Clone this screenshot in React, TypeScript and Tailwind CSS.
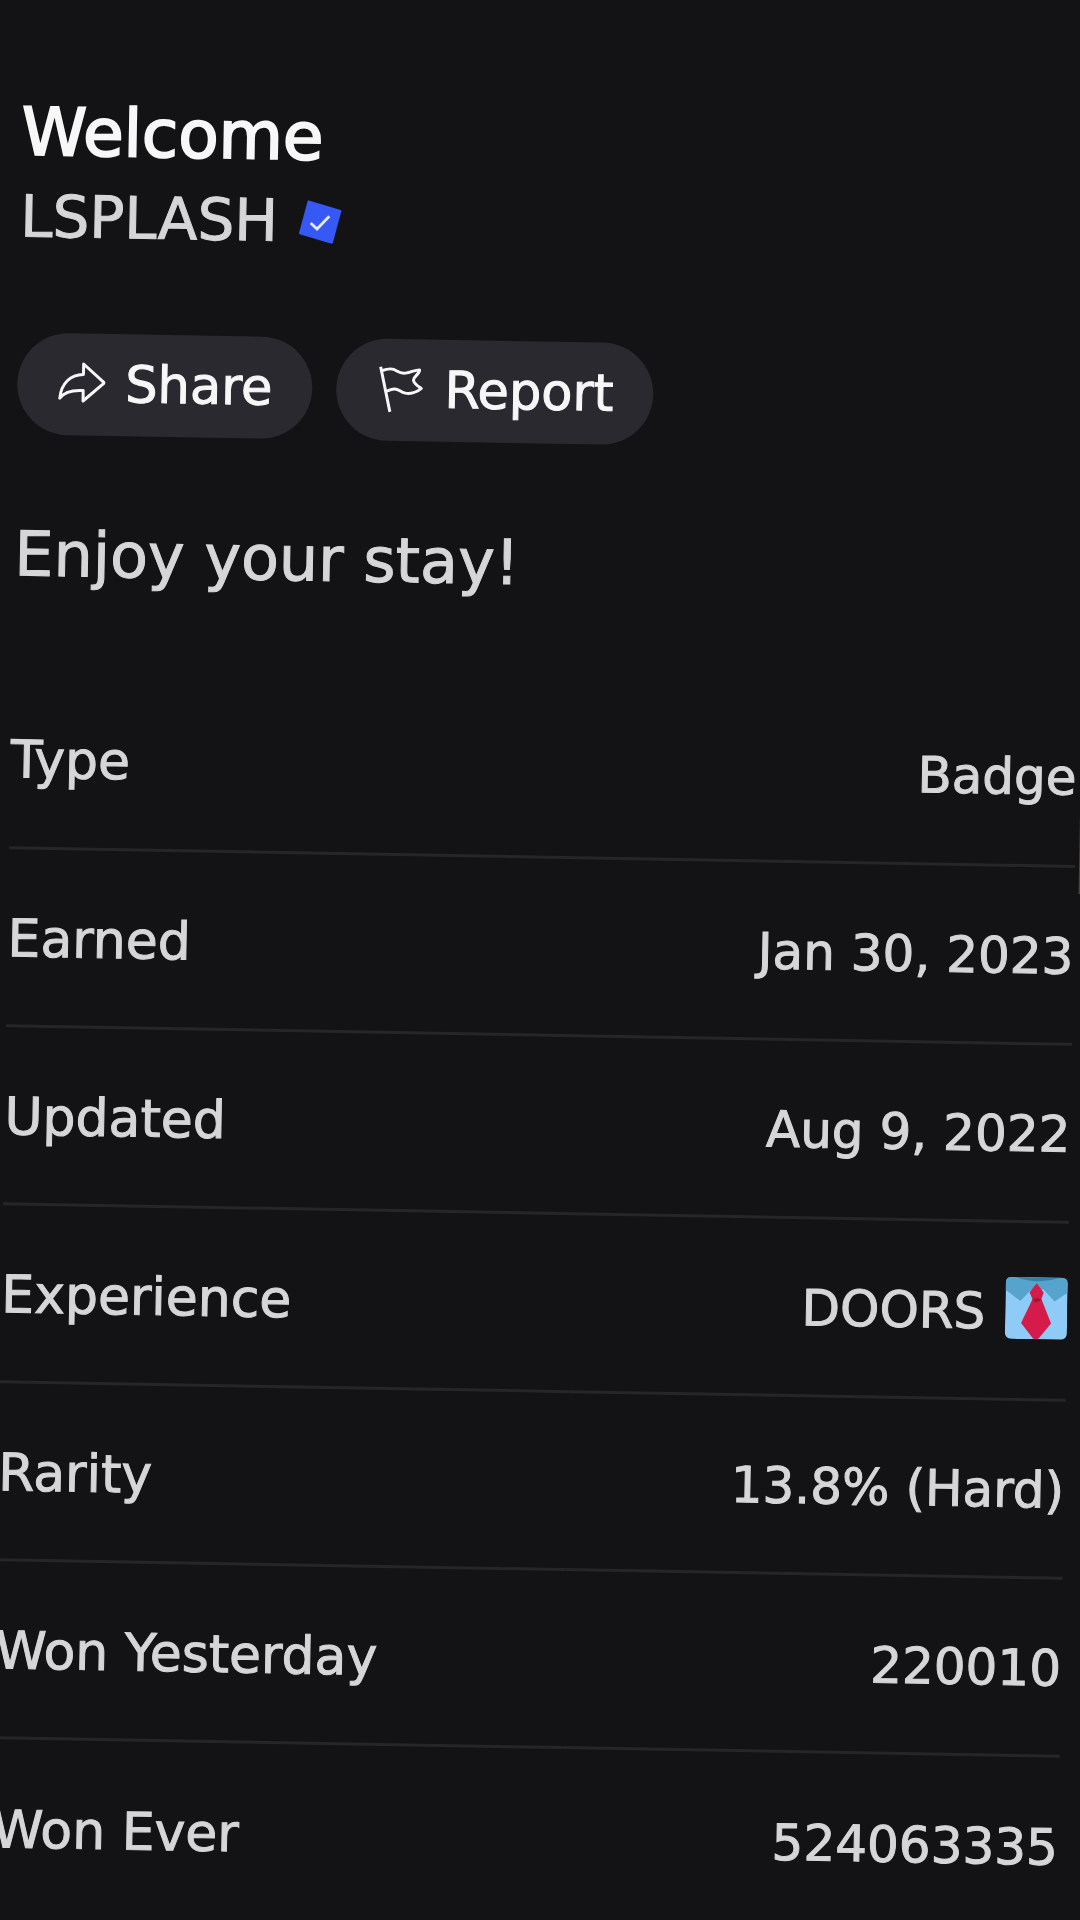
const details = [
  {label: "Type", value: "Badge"},
  {label: "Earned", value: "Jan 30, 2023"},
  {label: "Updated", value: "Aug 9, 2022"},
  {label: "Experience", value: "DOORS", icon: true},
  {label: "Rarity", value: "13.8% (Hard)"},
  {label: "Won Yesterday", value: "220010"},
  {label: "Won Ever", value: "524063335"},
];

export default function App() {
  return (
    <div className="min-h-screen overflow-hidden bg-[#131315] font-['DejaVu_Sans',sans-serif] text-[#d6d6d8] [-webkit-text-stroke:1px]">
      <main className="relative origin-top-left rotate-1 pl-6 pt-[90px]">
        <div className="-mr-[10px]">
          <h1 className="text-[66px] leading-[84px] text-[#f7f7f8] [-webkit-text-stroke:2px]">
            Welcome
          </h1>
          <div className="flex items-center gap-5">
            <span className="text-[58px] leading-[84px]">LSPLASH</span>
            <VerifiedIcon />
          </div>
          <div className="mt-[74px] flex gap-6">
            <ActionButton label="Share">
              <path d="M26 14V3.5L47 22 26 40.5V30C15 29.5 7 32 2.7 38 4 23 13 14.500 26 14Z" />
            </ActionButton>
            <ActionButton label="Report">
              <path d="M4 1 14 46M5 5C9 3.500 13 2 17 3.500S23 8 29 7 38 3.500 43 3.500C43 8 37 10 37 14 38 18 42 20 45 22 41 26 34 28 29 27S22 22.500 18 23 13 24.500 10 25.500" />
            </ActionButton>
          </div>
          <p className="mt-20 text-[62px] leading-[80px]">Enjoy your stay!</p>
          <table className="mt-[75px] w-full text-[50px] leading-[64px]">
            <tbody>
              {details.map((row) => (
                <tr
                  key={row.label}
                  className="h-[178px] border-b-3 border-[#262628] last:border-0">
                  <th
                    scope="row"
                    className="pt-1 text-left text-[52px] font-normal">
                    {row.label}
                  </th>
                  <td className="pt-1">
                    <div className="flex items-center justify-end gap-5">
                      {row.value}
                      {row.icon && <TieIcon />}
                    </div>
                  </td>
                </tr>
              ))}
            </tbody>
          </table>
        </div>
        {/* scrollbar thumb */}
        <div className="absolute -right-5 top-[740px] h-[135px] w-[6px] bg-[#454442]"></div>
      </main>
    </div>
  );
}

interface ActionButtonProps {
  label: string;
  children: React.ReactNode;
}

const ActionButton = ({label, children}: ActionButtonProps) => {
  return (
    <button
      type="button"
      className="flex items-center gap-5 rounded-full bg-[#2a2930] px-10 py-[11px] text-[51px] leading-[80px] text-[#f7f7f8] cursor-pointer">
      <svg
        className="h-12 w-12"
        viewBox="0 0 48 48"
        fill="none"
        stroke="currentColor"
        strokeWidth="3"
        strokeLinejoin="round"
        aria-hidden="true">
        {children}
      </svg>
      {label}
    </button>
  );
};

const VerifiedIcon = () => {
  return (
    <svg className="h-11 w-11" viewBox="0 0 44 44" aria-label="Verified">
      <path
        fill="#3658f5"
        stroke="#3658f5"
        strokeWidth="2"
        strokeLinejoin="round"
        d="M10 2 42 11 34 43 2 34Z"
      />
      <path
        fill="none"
        stroke="#e4e9ff"
        strokeWidth="2.800"
        d="m12.500 23.500 6.500 6 12-13"
      />
    </svg>
  );
};

const TieIcon = () => {
  return (
    <svg
      className="mb-2 h-[62px] w-[62px]"
      viewBox="0 0 62 62"
      aria-hidden="true">
      <rect width="62" height="62" rx="6" fill="#8ecbf7" />
      <path
        fill="#56a3ce"
        d="M6 0H56Q62 0 62 6V15L49 24 38 12H26L15 24 0 13V6Q0 0 6 0Z"
      />
      <path fill="#3a7fa3" d="M10 0H54Q32 8 10 0Z" />
      <path
        fill="#d51b49"
        d="M31 6 38 15 36 22 46 46 34 61Q31 64 28 61L16 46 27 22 24 15Z"
      />
      <path fill="#a3152f" d="M27 22Q31 20 36 22 31 28 27 22Z" />
    </svg>
  );
};
